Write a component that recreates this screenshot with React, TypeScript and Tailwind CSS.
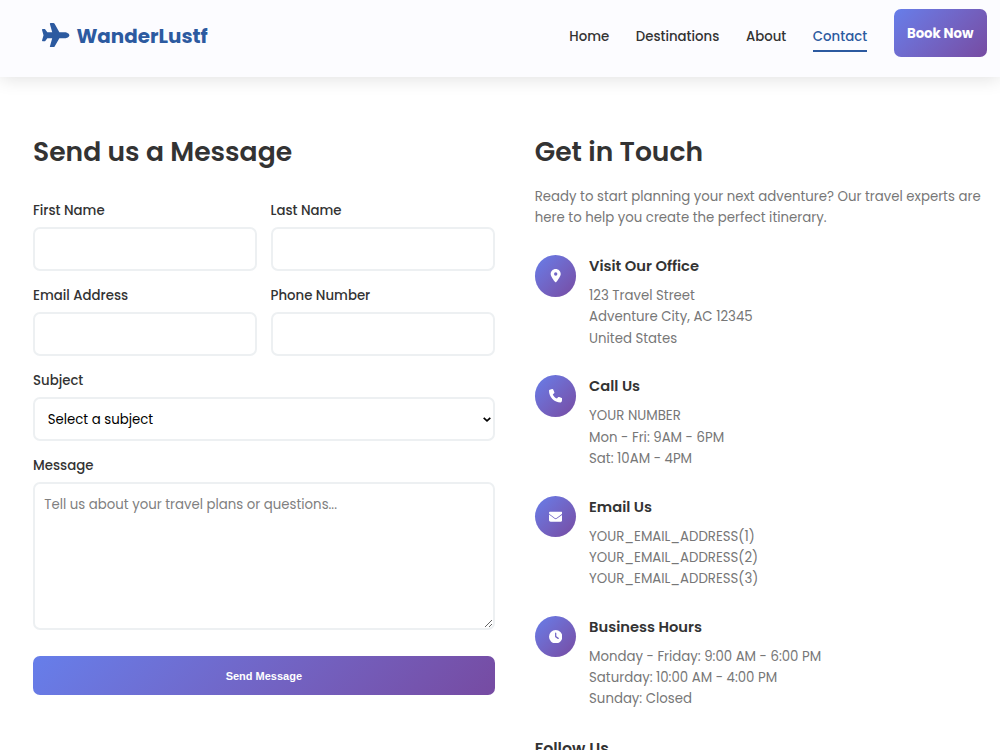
import type { ReactNode } from "react";
import { FaClock, FaEnvelope, FaLocationDot, FaPhone, FaPlane } from "react-icons/fa6";

const navLinks = ["Home", "Destinations", "About", "Contact"];

const contactItems: { title: string; icon: ReactNode; lines: string[] }[] = [
  {
    title: "Visit Our Office",
    icon: <FaLocationDot />,
    lines: ["123 Travel Street", "Adventure City, AC 12345", "United States"],
  },
  {
    title: "Call Us",
    icon: <FaPhone />,
    lines: ["YOUR NUMBER", "Mon - Fri: 9AM - 6PM", "Sat: 10AM - 4PM"],
  },
  {
    title: "Email Us",
    icon: <FaEnvelope />,
    lines: ["YOUR_EMAIL_ADDRESS(1)", "YOUR_EMAIL_ADDRESS(2)", "YOUR_EMAIL_ADDRESS(3)"],
  },
  {
    title: "Business Hours",
    icon: <FaClock />,
    lines: ["Monday - Friday: 9:00 AM - 6:00 PM", "Saturday: 10:00 AM - 4:00 PM", "Sunday: Closed"],
  },
];

const fieldClass = "block w-full rounded-[7px] border-2 border-[#edf0f2] bg-white outline-none";

function Field({ label, children }: { label: string; children: ReactNode }) {
  return (
    <label className="block">
      <span className="mb-[6.2px] block pt-[0.4px] font-medium leading-[21.3px]">{label}</span>
      {children}
    </label>
  );
}

function Header() {
  const active = "Contact";

  return (
    <header className="relative flex h-[77px] items-start justify-between bg-[#fcfcff] pl-[42.3px] pr-[13px] shadow-[0_2px_17px_rgba(0,0,0,0.12)]">
      <a href="#" className="mt-[22.6px] flex items-start text-[#2c5aa0]">
        <FaPlane className="h-[24.4px] w-[27.4px]" />
        <span className="ml-[6.7px] text-[19.9px] font-bold leading-[27px]">WanderLustf</span>
      </a>
      <div className="flex items-start">
        <nav className="mt-[25.7px] flex items-start gap-[26.6px]">
          {navLinks.map((link) => (
            <a
              key={link}
              href="#"
              className={`whitespace-nowrap border-b-2 pb-[2.6px] font-medium leading-[21.3px] ${
                link === active ? "border-[#2c5aa0] text-[#2c5aa0]" : "border-transparent"
              }`}
            >
              {link}
            </a>
          ))}
        </nav>
        <a
          href="#"
          className="ml-[26.4px] mt-[9px] h-12 w-[93.5px] rounded-[7px] bg-linear-135 from-[#667eea] to-[#764ba2] pt-[13.6px] text-center font-bold leading-[21.3px] text-white"
        >
          Book Now
        </a>
      </div>
    </header>
  );
}

function ContactForm() {
  return (
    <form className="w-[461.7px]">
      <h2 className="mb-[26.7px] text-[26.6px] font-semibold leading-[43px]">Send us a Message</h2>
      <div className="flex flex-col gap-[13.6px]">
        <div className="grid grid-cols-2 gap-x-[13.4px] gap-y-[13.6px]">
          <Field label="First Name">
            <input type="text" className={`${fieldClass} h-[43.6px] px-[11px]`} />
          </Field>
          <Field label="Last Name">
            <input type="text" className={`${fieldClass} h-[43.6px] px-[11px]`} />
          </Field>
          <Field label="Email Address">
            <input type="email" className={`${fieldClass} h-[43.6px] px-[11px]`} />
          </Field>
          <Field label="Phone Number">
            <input type="tel" className={`${fieldClass} h-[43.6px] px-[11px]`} />
          </Field>
        </div>
        <Field label="Subject">
          <span className="relative block">
            <select className={`${fieldClass} h-[43.6px] appearance-none pl-[12.7px] pt-px text-black`}>
              <option>Select a subject</option>
            </select>
            <svg
              className="pointer-events-none absolute right-[4px] top-[19.5px] h-[5px] w-[8px]"
              viewBox="0 0 8 5"
              fill="none"
              stroke="black"
              strokeWidth={1.7}
            >
              <path d="M0.7 0.8L4 3.8L7.3 0.8" />
            </svg>
          </span>
        </Field>
        <Field label="Message">
          <textarea
            placeholder="Tell us about your travel plans or questions..."
            className={`${fieldClass} h-[147.7px] resize-y px-[9.3px] py-[9.3px] leading-[21.3px] placeholder:text-[#808080]`}
          />
        </Field>
      </div>
      <button
        type="button"
        className="mt-[26.5px] block h-[39px] w-full rounded-[7px] bg-linear-135 from-[#667eea] to-[#764ba2] font-['Liberation_Sans',Arial,sans-serif] text-[11px] font-bold text-white"
      >
        Send Message
      </button>
    </form>
  );
}

function ContactInfo() {
  return (
    <section className="w-[461px]">
      <h2 className="mb-[13.5px] text-[26.6px] font-semibold leading-[43px]">Get in Touch</h2>
      <p className="mb-[26.4px] leading-[21.3px] text-[#777]">
        Ready to start planning your next adventure? Our travel experts are
        here to help you create the perfect itinerary.
      </p>
      <div className="flex flex-col gap-[26.4px]">
        {contactItems.map((item) => (
          <div key={item.title} className="flex gap-[12.6px]">
            <div className="flex size-[41.7px] shrink-0 items-center justify-center rounded-full bg-linear-135 from-[#667eea] to-[#764ba2] text-[13.4px] text-white">
              {item.icon}
            </div>
            <div>
              <h3 className="mb-[6.4px] text-[14.67px] font-semibold leading-[23.6px]">{item.title}</h3>
              {item.lines.map((line) => (
                <p key={line} className="whitespace-nowrap leading-[21.3px] text-[#777]">
                  {line}
                </p>
              ))}
            </div>
          </div>
        ))}
      </div>
      <h3 className="mt-[26.6px] text-[15.8px] font-semibold leading-[25.6px]">Follow Us</h3>
    </section>
  );
}

export default function App() {
  return (
    <div className="h-[750px] w-[1000px] overflow-hidden bg-white font-['Poppins','Inter',sans-serif] text-[13.3px] text-[#333]">
      <Header />
      <main className="flex gap-[40.1px] pl-[33px] pt-[52.5px]">
        <ContactForm />
        <ContactInfo />
      </main>
    </div>
  );
}
